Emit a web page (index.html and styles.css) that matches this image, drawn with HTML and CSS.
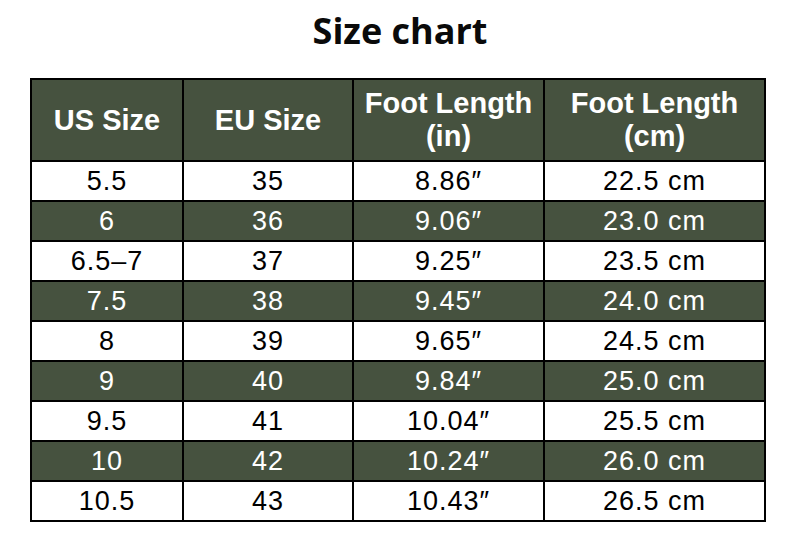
FILE: index.html
```html
<!DOCTYPE html>
<html lang="en">
<head>
<meta charset="utf-8">
<title>Size chart</title>
<link rel="stylesheet" href="styles.css">
</head>
<body>
<h1 class="title">Size chart</h1>
<table class="chart">
  <colgroup>
    <col class="c1"><col class="c2"><col class="c3"><col class="c4">
  </colgroup>
  <thead>
    <tr class="head">
      <th>US Size</th>
      <th>EU Size</th>
      <th>Foot Length<br>(in)</th>
      <th>Foot Length<br>(cm)</th>
    </tr>
  </thead>
  <tbody>
    <tr class="light"><td>5.5</td><td>35</td><td>8.86″</td><td>22.5 cm</td></tr>
    <tr class="dark"><td>6</td><td>36</td><td>9.06″</td><td>23.0 cm</td></tr>
    <tr class="light"><td>6.5–7</td><td>37</td><td>9.25″</td><td>23.5 cm</td></tr>
    <tr class="dark"><td>7.5</td><td>38</td><td>9.45″</td><td>24.0 cm</td></tr>
    <tr class="light"><td>8</td><td>39</td><td>9.65″</td><td>24.5 cm</td></tr>
    <tr class="dark"><td>9</td><td>40</td><td>9.84″</td><td>25.0 cm</td></tr>
    <tr class="light"><td>9.5</td><td>41</td><td>10.04″</td><td>25.5 cm</td></tr>
    <tr class="dark"><td>10</td><td>42</td><td>10.24″</td><td>26.0 cm</td></tr>
    <tr class="light"><td>10.5</td><td>43</td><td>10.43″</td><td>26.5 cm</td></tr>
  </tbody>
</table>
</body>
</html>
```

FILE: styles.css
```css
html, body {
  margin: 0;
  padding: 0;
  background: #ffffff;
}

body {
  font-family: "Liberation Sans", Arial, sans-serif;
  color: #000000;
}

.title {
  margin: 9px 0 0 0;
  height: 69px;
  font-family: "Open Sans", "Liberation Sans", sans-serif;
  font-weight: 700;
  font-size: 36px;
  line-height: 44px;
  text-align: center;
  color: #0a0a0a;
}

.chart {
  margin-left: 30px;
  width: 736px;
  box-sizing: border-box;
  table-layout: fixed;
  border-collapse: separate;
  border-spacing: 0;
  border-top: 2px solid #000;
  border-left: 2px solid #000;
}

.c1 { width: 152px; }
.c2 { width: 170px; }
.c3 { width: 191px; }
.c4 { width: 221px; }

.chart th,
.chart td {
  box-sizing: border-box;
  padding: 0;
  border-right: 2px solid #000;
  border-bottom: 2px solid #000;
  text-align: center;
  vertical-align: middle;
}

.head {
  height: 82px;
}

.head th {
  background: #46523f;
  color: #ffffff;
  font-weight: 700;
  font-size: 29px;
  line-height: 33px;
}

.chart tbody tr {
  height: 40px;
}

.chart td {
  font-size: 27px;
  letter-spacing: 1px;
  line-height: 30px;
}

.light td {
  background: #ffffff;
  color: #000000;
}

.dark td {
  background: #46523f;
  color: #ffffff;
}
```
